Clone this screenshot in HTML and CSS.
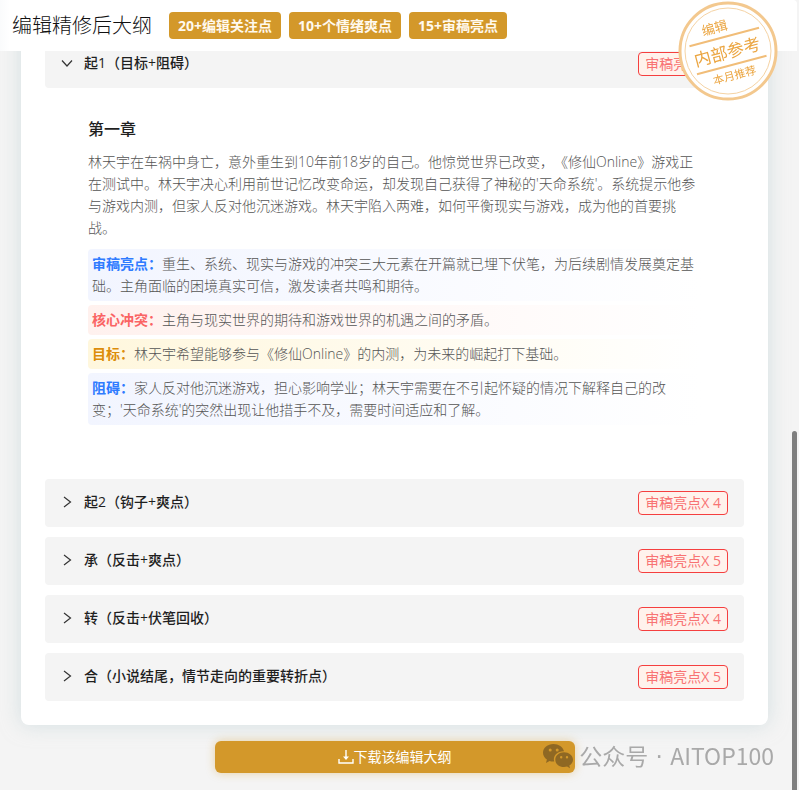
FILE: index.html
```html
<!DOCTYPE html>
<html lang="zh-CN">

<head>
    <meta charset="UTF-8">
    <meta name="viewport" content="width=device-width, initial-scale=1.0">
    <title>编辑精修后大纲</title>
    <link rel="stylesheet" href="styles.css">
</head>

<body>
    <header class="header">
        <h1 class="header-title">编辑精修后大纲</h1>
        <ul class="badges">
            <li class="badge">20+编辑关注点</li>
            <li class="badge">10+个情绪爽点</li>
            <li class="badge">15+审稿亮点</li>
        </ul>
    </header>

    <!-- stamp -->
    <svg class="stamp" viewBox="0 0 100 100" role="img" aria-label="内部参考">
        <circle cx="50" cy="50" r="48" fill="#fff" stroke="#f3c88e" stroke-width="3" />
        <circle cx="50" cy="50" r="43" fill="none" stroke="#f5d3a4" stroke-width="1" />
        <g transform="rotate(-15 50 50)">
            <path d="M14 35.500H86M14 64.500H86" stroke="#f1bd78" stroke-width="2" />
            <text class="stamp-top" x="43" y="29">编辑</text>
            <text class="stamp-main" x="49" y="57">内部参考</text>
            <text class="stamp-bottom" x="50" y="79">本月推荐</text>
        </g>
    </svg>

    <main class="page">
        <div class="card">
            <section class="panel">
                <button class="panel-header" type="button" aria-expanded="true">
                    <svg class="arrow" viewBox="0 0 12 12"><path d="M1 3.500L6 9L11 3.500" /></svg>
                    <span class="panel-title">起1（目标+阻碍）</span>
                    <span class="tag">审稿亮点X 4</span>
                </button>
                <div class="panel-body">
                    <h2 class="chapter">第一章</h2>
                    <p class="summary">林天宇在车祸中身亡，意外重生到10年前18岁的自己。他惊觉世界已改变，《修仙Online》游戏正在测试中。林天宇决心利用前世记忆改变命运，却发现自己获得了神秘的'天命系统'。系统提示他参与游戏内测，但家人反对他沉迷游戏。林天宇陷入两难，如何平衡现实与游戏，成为他的首要挑战。</p>
                    <div class="notes">
                        <p class="note note-blue"><strong>审稿亮点：</strong>重生、系统、现实与游戏的冲突三大元素在开篇就已埋下伏笔，为后续剧情发展奠定基础。主角面临的困境真实可信，激发读者共鸣和期待。</p>
                        <p class="note note-red"><strong>核心冲突：</strong>主角与现实世界的期待和游戏世界的机遇之间的矛盾。</p>
                        <p class="note note-yellow"><strong>目标：</strong>林天宇希望能够参与《修仙Online》的内测，为未来的崛起打下基础。</p>
                        <p class="note note-blue"><strong>阻碍：</strong>家人反对他沉迷游戏，担心影响学业；林天宇需要在不引起怀疑的情况下解释自己的改变；'天命系统'的突然出现让他措手不及，需要时间适应和了解。</p>
                    </div>
                </div>
            </section>

            <section class="panel">
                <button class="panel-header" type="button" aria-expanded="false">
                    <svg class="arrow" viewBox="0 0 12 12"><path d="M3 1L9.500 6L3 11" /></svg>
                    <span class="panel-title">起2（钩子+爽点）</span>
                    <span class="tag">审稿亮点X 4</span>
                </button>
            </section>

            <section class="panel">
                <button class="panel-header" type="button" aria-expanded="false">
                    <svg class="arrow" viewBox="0 0 12 12"><path d="M3 1L9.500 6L3 11" /></svg>
                    <span class="panel-title">承（反击+爽点）</span>
                    <span class="tag">审稿亮点X 5</span>
                </button>
            </section>

            <section class="panel">
                <button class="panel-header" type="button" aria-expanded="false">
                    <svg class="arrow" viewBox="0 0 12 12"><path d="M3 1L9.500 6L3 11" /></svg>
                    <span class="panel-title">转（反击+伏笔回收）</span>
                    <span class="tag">审稿亮点X 4</span>
                </button>
            </section>

            <section class="panel">
                <button class="panel-header" type="button" aria-expanded="false">
                    <svg class="arrow" viewBox="0 0 12 12"><path d="M3 1L9.500 6L3 11" /></svg>
                    <span class="panel-title">合（小说结尾，情节走向的重要转折点）</span>
                    <span class="tag">审稿亮点X 5</span>
                </button>
            </section>
        </div>

        <button class="download" type="button">
            <svg class="download-icon" viewBox="0 0 16 16"><path d="M1 10V14H15V10M8 1V9" /><path class="download-head" d="M5 7.500H11L8 11Z" /></svg>
            下载该编辑大纲
        </button>
    </main>

    <!-- watermark -->
    <div class="watermark">
        <svg class="wechat" viewBox="0 0 30 25">
            <path fill-rule="evenodd" d="M10.500 0C4.700 0 0 3.900 0 8.800C0 11.600 1.500 14 3.900 15.600L3 19L6.600 17C7.900 17.400 9.500 17.600 11.200 17.500C9.600 12 14.100 7.200 21 7.200C20 3 15.600 0 10.500 0ZM7.200 4.500A1.500 1.500 0 1 1 7.200 7.500A1.500 1.500 0 1 1 7.200 4.500ZM14.200 4.500A1.500 1.500 0 1 1 14.200 7.500A1.500 1.500 0 1 1 14.200 4.500Z" />
            <path fill-rule="evenodd" d="M21 8.300C16.200 8.300 12.300 11.600 12.300 15.700C12.300 19.800 16.200 23.100 21 23.100C22.100 23.100 23.100 22.900 24.100 22.600L27 24.300L26.300 21.500C28.500 20.200 30 18.100 30 15.700C30 11.600 25.900 8.300 21 8.300ZM18.200 12A1.200 1.200 0 1 1 18.200 14.400A1.200 1.200 0 1 1 18.200 12ZM24 12A1.200 1.200 0 1 1 24 14.400A1.200 1.200 0 1 1 24 12Z" />
        </svg>
        <span>公众号<span class="dot"> · </span>AITOP100</span>
    </div>

    <div class="scroll-thumb"></div>
</body>

</html>
```

FILE: styles.css
```css
* {
    box-sizing: border-box;
}

body {
    margin: 0;
    background-color: #f4f4f4;
    color: #1f1f1f;
    font-family: "Open Sans", "Noto Sans CJK SC", sans-serif;
    font-size: 14px;
    line-height: 22px;
    text-spacing-trim: space-all;
}

h1,
h2,
p,
ul {
    margin: 0;
    padding: 0;
}

button {
    border: none;
    font: inherit;
    color: inherit;
    text-align: left;
    cursor: pointer;
}

/* header */
.header {
    position: fixed;
    top: 0;
    left: 0;
    right: 2px;
    z-index: 2;
    display: flex;
    align-items: center;
    gap: 17px;
    height: 51px;
    padding: 0 12px;
    background: linear-gradient(to right, #fafbfc, #fff 10px);
    border-radius: 0 4px 0 0;
}

.header-title {
    font-size: 20px;
    font-weight: 300;
    line-height: 48px;
    color: #111;
}

.badges {
    display: flex;
    gap: 8px;
    list-style: none;
}

.badge {
    padding: 3px 9px 2px;
    border-radius: 4px;
    background-color: #d3982a;
    color: #fff9ee;
    font-weight: 700;
}

.stamp {
    position: fixed;
    top: 1px;
    right: 21px;
    z-index: 3;
    width: 100px;
    height: 100px;
}

.stamp text {
    fill: #eba540;
    font-family: "Noto Sans CJK SC", sans-serif;
    text-anchor: middle;
}

.stamp-top {
    font-size: 13px;
}

.stamp-main {
    font-size: 17px;
}

.stamp-bottom {
    font-size: 11px;
}

/* content */
.page {
    display: flex;
    flex-direction: column;
    gap: 16px;
    padding: 0 31px 16px 21px;
}

.card {
    display: flex;
    flex-direction: column;
    gap: 10px;
    padding: 40px 24px 24px;
    border-radius: 0 0 8px 8px;
    background-color: #fff;
    box-shadow: 0 0 20px rgba(190, 208, 212, 0.6);
}

.panel-header {
    display: flex;
    align-items: flex-start;
    gap: 11px;
    width: 100%;
    padding: 12px 16px;
    border-radius: 4px;
    background-color: #f4f4f4;
}

.arrow {
    width: 12px;
    height: 22px;
    fill: none;
    stroke: #333;
    stroke-width: 1.2;
}

.panel-title {
    flex: 1;
    font-weight: 500;
}

.tag {
    padding: 0 6px;
    border: 1px solid #f53f3f;
    border-radius: 4px;
    background-color: #fff2ec;
    color: #f87373;
}

.panel-body {
    padding: 29px 43px 44px;
}

.chapter {
    margin-bottom: 10px;
    font-size: 16px;
    font-weight: 500;
    line-height: 24px;
}

.summary {
    margin-bottom: 10px;
    color: #555;
    font-weight: 300;
}

.notes {
    display: flex;
    flex-direction: column;
    gap: 4px;
}

.note {
    padding: 4px;
    border-radius: 4px;
    color: #555;
    font-weight: 300;
}

.note strong {
    font-weight: 700;
}

.note-blue {
    background: linear-gradient(to right, #f2f5ff, #fff);
}

.note-blue strong {
    color: #2f7bff;
}

.note-red {
    background: linear-gradient(to right, #fff1ee, #fff);
}

.note-red strong {
    color: #fa6464;
}

.note-yellow {
    background: linear-gradient(to right, #fff7dd, #fff);
}

.note-yellow strong {
    color: #dc8d0a;
}

.download {
    display: flex;
    align-items: center;
    justify-content: center;
    align-self: center;
    width: 360px;
    max-width: 100%;
    height: 32px;
    padding: 0;
    border-radius: 6px;
    background-color: #d3982a;
    box-shadow: 0 0 10px rgba(211, 152, 42, 0.4);
    color: #fff;
}

.download-icon {
    width: 16px;
    height: 16px;
    fill: none;
    stroke: #fff;
    stroke-width: 1.4;
}

.download-icon .download-head {
    fill: #fff;
    stroke: none;
}

.watermark {
    position: fixed;
    right: 25px;
    bottom: 17px;
    display: flex;
    align-items: center;
    gap: 6px;
    color: #a9a9a9;
    font-family: "Noto Sans CJK SC", sans-serif;
    font-size: 23px;
    line-height: 32px;
}

.dot {
    font-family: "DejaVu Sans", sans-serif;
}

.wechat {
    width: 30px;
    height: 25px;
    fill: #8f6823;
}

.scroll-thumb {
    position: fixed;
    top: 431px;
    right: 2px;
    bottom: 0;
    width: 5px;
    border-radius: 3px 3px 0 0;
    background-color: #7f7f7f;
}
```
